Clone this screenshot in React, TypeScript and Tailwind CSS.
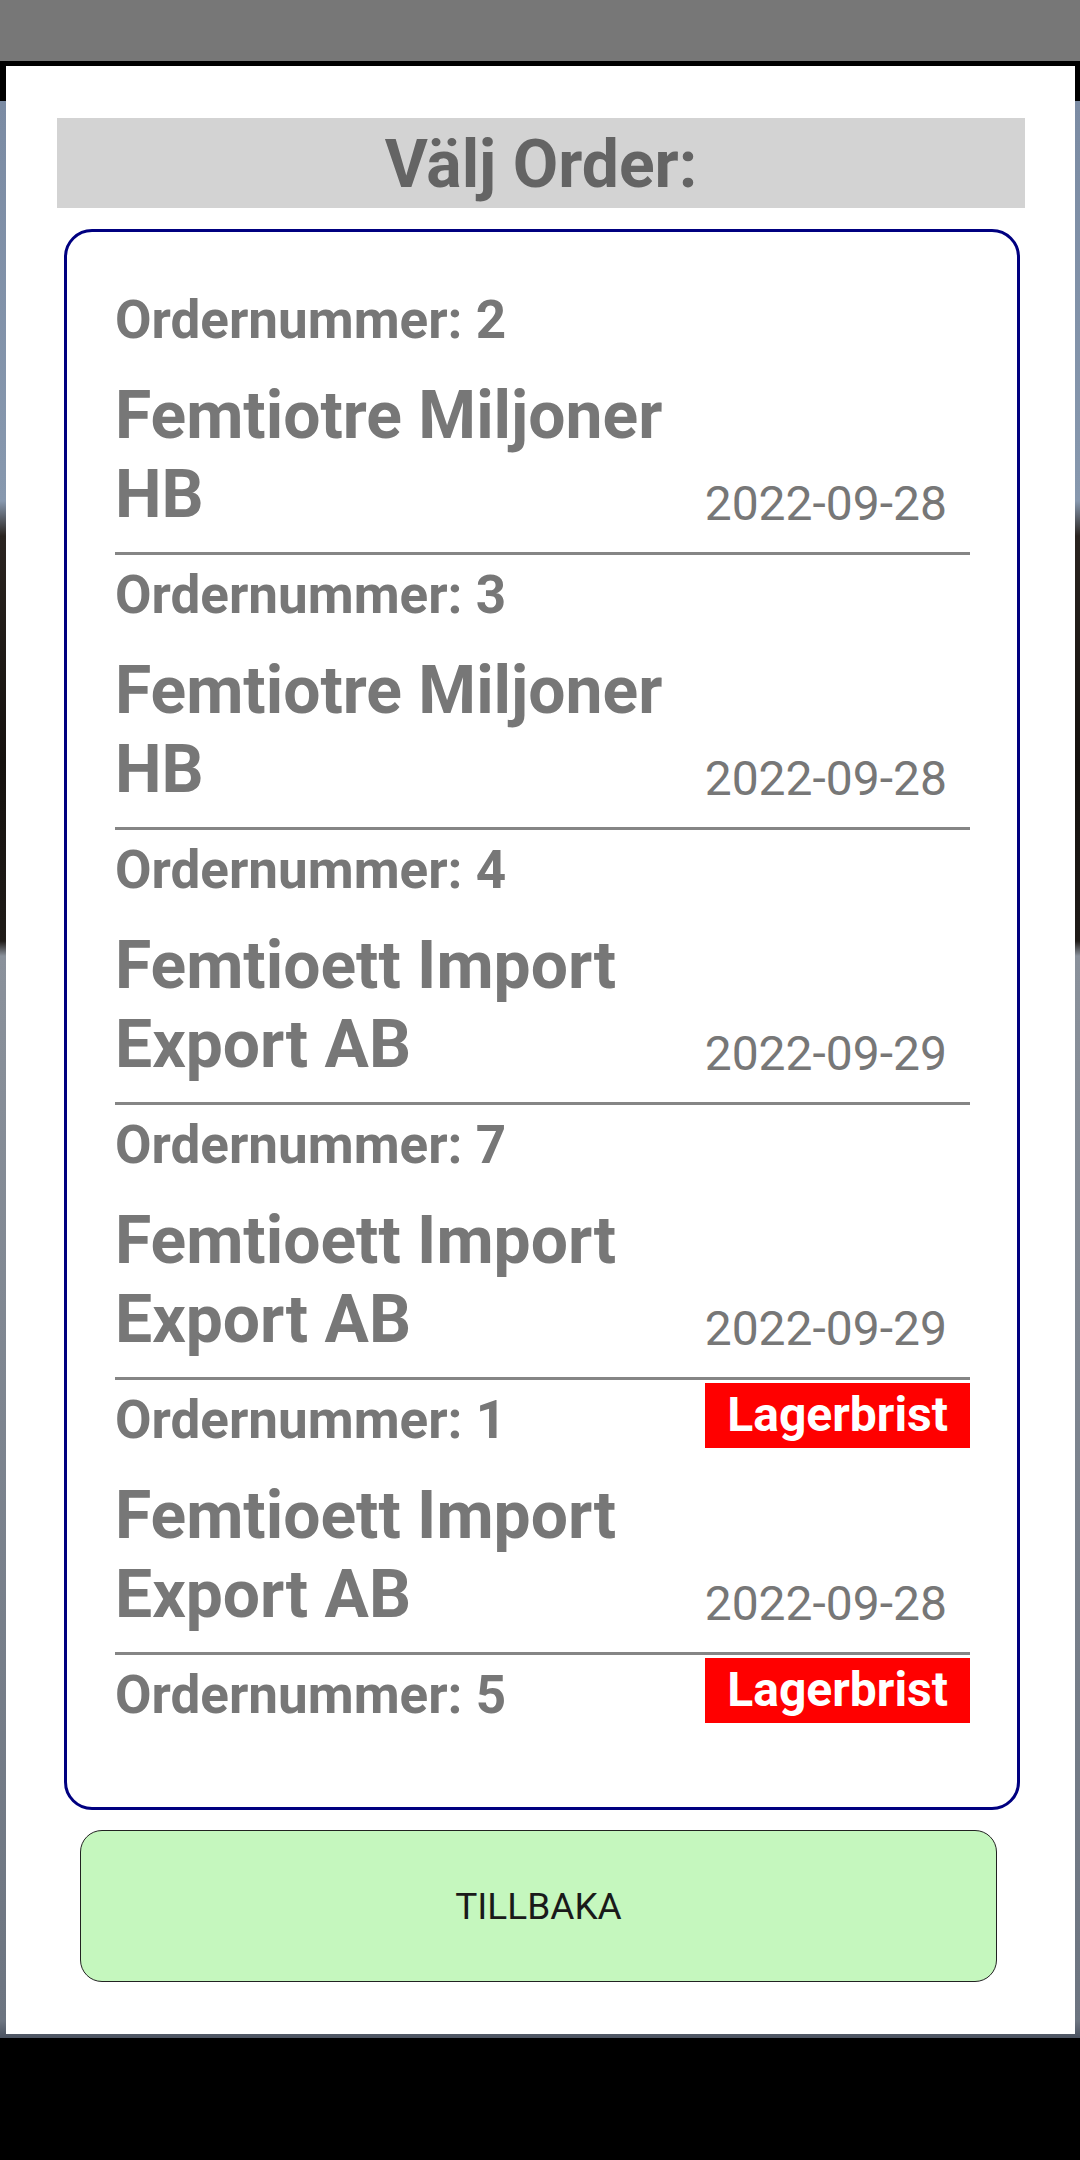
import React from "react";

type Order = {
  nr: number;
  lines?: string[];
  date?: string;
  shortage?: boolean;
};

const orders: Order[] = [
  { nr: 2, lines: ["Femtiotre Miljoner", "HB"], date: "2022-09-28" },
  { nr: 3, lines: ["Femtiotre Miljoner", "HB"], date: "2022-09-28" },
  { nr: 4, lines: ["Femtioett Import", "Export AB"], date: "2022-09-29" },
  { nr: 7, lines: ["Femtioett Import", "Export AB"], date: "2022-09-29" },
  { nr: 1, lines: ["Femtioett Import", "Export AB"], date: "2022-09-28", shortage: true },
  { nr: 5, shortage: true },
];

function Row({ o, first }: { o: Order; first: boolean }) {
  return (
    <div className={first ? "" : "mt-[9px]"}>
      <div className="flex h-[62px] items-center justify-between">
        <span className="text-[53px] font-bold leading-[62px] text-[#777777]">
          Ordernummer: {o.nr}
        </span>
        {o.shortage && (
          <span className="-mt-[10px] flex h-[65px] items-center bg-[#ff0000] px-[22px] text-[48px] font-bold leading-none text-white">
            Lagerbrist
          </span>
        )}
      </div>
      {o.lines && (
        <>
          <div className="mt-[25px] flex items-end justify-between">
            <div className="text-[66px] font-bold leading-[79px] text-[#777777]">
              {o.lines.map((l) => (
                <div key={l}>{l}</div>
              ))}
            </div>
            <span className="mb-[3px] mr-[23px] text-[48px] font-normal leading-[55px] text-[#777777]">
              {o.date}
            </span>
          </div>
          <div className="mt-[18px] h-[3px] bg-[#858585]" />
        </>
      )}
    </div>
  );
}

export default function App() {
  return (
    <div
      className="flex h-[2160px] w-[1080px] flex-col bg-black"
      style={{ fontFamily: "Roboto, 'Noto Sans', Arial, sans-serif" }}
    >
      <div className="h-[61px] shrink-0 bg-[#777777]" />
      <div className="h-[1977px] shrink-0 bg-[linear-gradient(to_bottom,#000000_0px,#000000_40px,#7b8ba3_40px,#8798ae_440px,#2a2420_475px,#15110e_700px,#1f1b18_880px,#8a919b_895px,#6c7480_1960px,#4a5260_1977px)] pl-[6px] pr-[5px] pt-[5px]">
        <div className="flex h-[1968px] flex-col bg-white">
          <div className="ml-[51px] mt-[52px] flex h-[90px] w-[968px] items-center justify-center bg-[#d3d3d3] pt-[4px]">
            <span className="text-[66px] font-bold leading-none text-[#646464]">Välj Order:</span>
          </div>
          <div className="ml-[58px] mt-[21px] w-[956px] rounded-[28px] border-[3px] border-[#000080] pb-[81px] pl-[48px] pr-[47px] pt-[57px]">
            {orders.map((o, i) => (
              <Row key={o.nr} o={o} first={i === 0} />
            ))}
          </div>
          <div className="ml-[74px] mt-[20px] flex h-[152px] w-[917px] items-center justify-center rounded-[22px] border border-[#222222] bg-[#c5f7be]">
            <span className="text-[37px] font-normal leading-none text-[#1a1a1a]">TILLBAKA</span>
          </div>
        </div>
      </div>
    </div>
  );
}
